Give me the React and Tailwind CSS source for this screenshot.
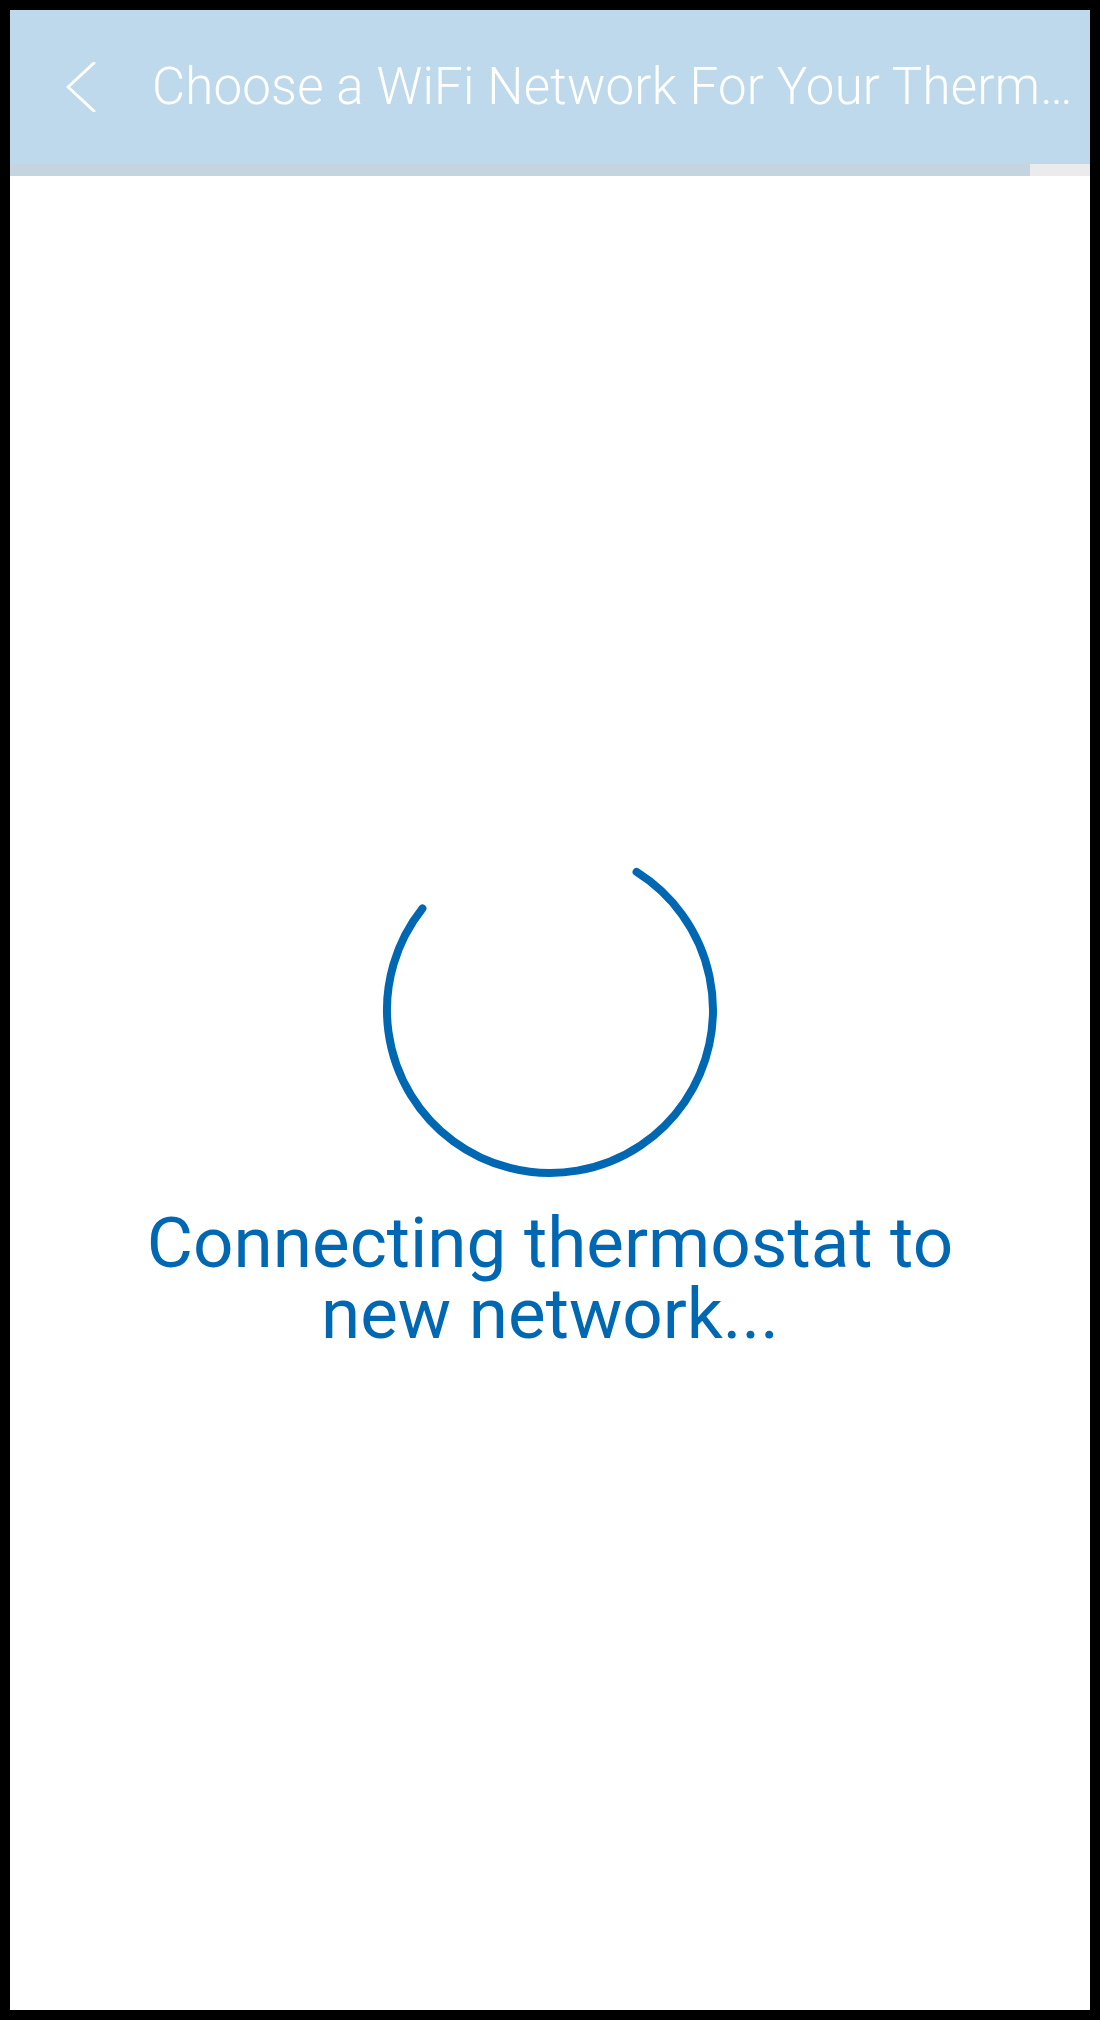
export default function App() {
  return (
    <div className="h-[2020px] w-[1100px] bg-black p-[10px]">
      <div className="flex h-full flex-col bg-white" style={{ fontFamily: 'Roboto, "Noto Sans", sans-serif' }}>
        {/* top bar */}
        <header className="flex h-[154px] shrink-0 items-center bg-[#bdd9eb] pl-[56px] pr-[10px]">
          <button className="flex h-[50px] w-[30px] shrink-0 items-center justify-center">
            <svg width="30" height="50" viewBox="0 0 30 50" fill="none">
              <path d="M28 1 L2 25 L28 49" stroke="white" strokeWidth="3" strokeLinecap="round" strokeLinejoin="round" />
            </svg>
          </button>
          <h1 className="ml-[56px] min-w-0 flex-1 whitespace-nowrap text-[51px] leading-[60px] font-light tracking-[0.2px] text-white">
            Choose a WiFi Network For Your Therm…
          </h1>
        </header>

        {/* progress */}
        <div className="flex h-[12px] shrink-0 bg-[#ebebeb]">
          <div className="h-full w-[1020px] bg-[#c5d5e0]" />
        </div>

        <main className="flex flex-1 flex-col items-center justify-center">
          <svg width="344" height="344" viewBox="0 0 344 344" fill="none">
            <path
              d="M44.4 70.5 A163 163 0 1 0 258.6 33.9"
              stroke="#0068b3"
              strokeWidth="8"
              strokeLinecap="round"
            />
          </svg>
          <p className="mt-[25px] text-center text-[71px] leading-[71px] text-[#0068b3]">
            Connecting thermostat to
            <br />
            new network...
          </p>
        </main>
      </div>
    </div>
  );
}
